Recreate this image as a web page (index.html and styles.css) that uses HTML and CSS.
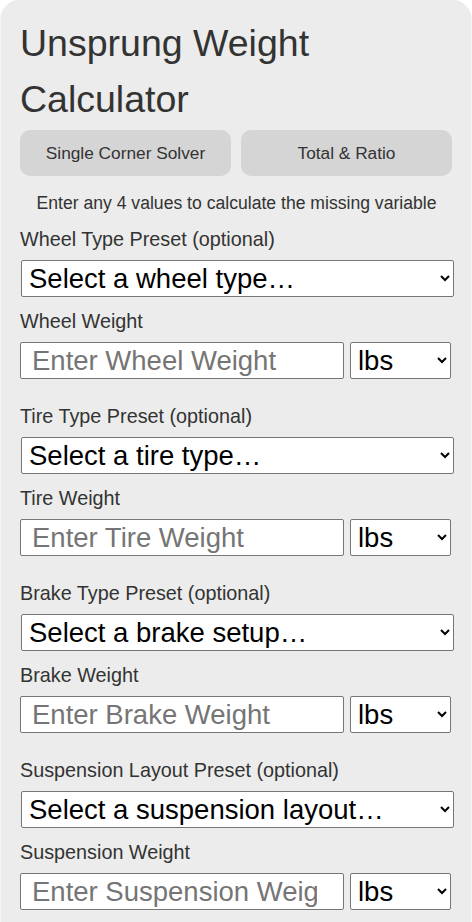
FILE: index.html
```html
<!DOCTYPE html>
<html lang="en">

<head>
    <meta charset="UTF-8">
    <meta name="viewport" content="width=device-width, initial-scale=1.0">
    <title>Unsprung Weight Calculator</title>
    <link rel="stylesheet" href="styles.css">
</head>

<body>

    <div class="calculator">
        <h1>Unsprung Weight Calculator</h1>

        <!-- Abas -->
        <div class="tabs">
            <button class="tab">Single Corner Solver</button>
            <button class="tab">Total &amp; Ratio</button>
        </div>

        <p class="hint">Enter any 4 values to calculate the missing variable</p>

        <!-- Roda -->
        <div class="group">
            <label for="wheel-preset">Wheel Type Preset (optional)</label>
            <select id="wheel-preset" class="preset">
                <option>Select a wheel type…</option>
                <option>Steel wheel</option>
                <option>Cast aluminum</option>
                <option>Forged aluminum</option>
            </select>
            <label for="wheel-weight">Wheel Weight</label>
            <div class="value-row">
                <input type="number" id="wheel-weight" placeholder="Enter Wheel Weight">
                <select class="unit">
                    <option>lbs</option>
                    <option>kg</option>
                </select>
            </div>
        </div>

        <!-- Pneu -->
        <div class="group">
            <label for="tire-preset">Tire Type Preset (optional)</label>
            <select id="tire-preset" class="preset">
                <option>Select a tire type…</option>
                <option>Street tire</option>
                <option>Performance tire</option>
                <option>Off-road tire</option>
            </select>
            <label for="tire-weight">Tire Weight</label>
            <div class="value-row">
                <input type="number" id="tire-weight" placeholder="Enter Tire Weight">
                <select class="unit">
                    <option>lbs</option>
                    <option>kg</option>
                </select>
            </div>
        </div>

        <!-- Freio -->
        <div class="group">
            <label for="brake-preset">Brake Type Preset (optional)</label>
            <select id="brake-preset" class="preset">
                <option>Select a brake setup…</option>
                <option>Single piston caliper</option>
                <option>4 piston caliper</option>
                <option>Big brake kit</option>
            </select>
            <label for="brake-weight">Brake Weight</label>
            <div class="value-row">
                <input type="number" id="brake-weight" placeholder="Enter Brake Weight">
                <select class="unit">
                    <option>lbs</option>
                    <option>kg</option>
                </select>
            </div>
        </div>

        <!-- Suspensao -->
        <div class="group">
            <label for="susp-preset">Suspension Layout Preset (optional)</label>
            <select id="susp-preset" class="preset">
                <option>Select a suspension layout…</option>
                <option>MacPherson strut</option>
                <option>Double wishbone</option>
                <option>Multi-link</option>
            </select>
            <label for="susp-weight">Suspension Weight</label>
            <div class="value-row">
                <input type="number" id="susp-weight" placeholder="Enter Suspension Weight">
                <select class="unit">
                    <option>lbs</option>
                    <option>kg</option>
                </select>
            </div>
        </div>
    </div>

</body>

</html>
```

FILE: styles.css
```css
/* Estilos gerais */
body {
    font-family: "Liberation Sans", Arial, sans-serif;
    margin: 0;
    padding: 0;
    background-color: #ffffff;
    color: #333;
}

.calculator {
    width: 470px;
    box-sizing: border-box;
    margin: 0 1px;
    padding: 15px 18px 30px 19px;
    background-color: #ebeceb;
    border-radius: 20px;
    box-shadow: 0 0 2px rgba(0, 0, 0, 0.15);
}

h1 {
    margin: 0;
    font-size: 37.5px;
    line-height: 56px;
    font-weight: normal;
    color: #333;
}

/* Abas */
.tabs {
    display: flex;
    gap: 10px;
    margin-top: 3px;
    padding-right: 1px;
}

.tab {
    flex: 1;
    height: 46px;
    border: none;
    border-radius: 10px;
    background-color: #d5d5d5;
    color: #333;
    font-family: inherit;
    font-size: 17.3px;
    cursor: pointer;
}

.hint {
    margin: 17px 0 14px;
    text-align: center;
    font-size: 17.6px;
    line-height: 21px;
}

/* Campos */
.group {
    margin-bottom: 26px;
}

.group label {
    display: block;
    font-size: 19.8px;
    line-height: 22px;
    margin-bottom: 10px;
}

select,
input {
    font-family: inherit;
    font-size: 27.5px;
    height: 37px;
    box-sizing: border-box;
    border: 1px solid #767676;
    border-radius: 2px;
    background-color: #fff;
    color: #000;
    margin: 0;
}

.preset {
    display: block;
    width: 433px;
    margin-left: 1px;
    margin-bottom: 13px;
    padding: 0 3px;
}

.value-row {
    display: flex;
    gap: 6px;
    width: 431px;
}

.value-row input {
    flex: 1;
    min-width: 0;
    padding: 0 11px;
}

.value-row input::placeholder {
    color: #757575;
}

.unit {
    width: 101px;
    padding: 0 3px;
}
```
